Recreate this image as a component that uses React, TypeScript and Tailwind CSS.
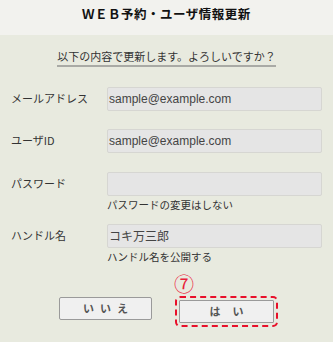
import React from 'react';

const jp = { fontFamily: '"Noto Sans CJK JP", "Noto Sans", sans-serif' };

type RowProps = {
  label: string;
  value: string;
  note?: string;
};

const FormRow: React.FC<RowProps> = ({ label, value, note }) => (
  <div className="flex">
    <div className="w-[96px] shrink-0 pt-[3px] text-[11px] text-[#333]" style={jp}>
      {label}
    </div>
    <div className="w-[215px]">
      <div className="flex h-[24px] items-center rounded-[2px] border border-[#d6d6d2] bg-[#e5e5e5] px-[1px] text-[12px] text-[#444] font-['Liberation_Sans',Arial,sans-serif]">
        <span style={value && !/^[\x00-\x7f]+$/.test(value) ? jp : undefined}>{value}</span>
      </div>
      {note && (
        <div className="mt-[2px] text-[10.5px] leading-[14px] text-[#333]" style={jp}>
          {note}
        </div>
      )}
    </div>
  </div>
);

export default function App() {
  return (
    <div className="w-[333px] h-[342px] overflow-hidden bg-[#e8eadf]" style={jp}>
      {/* header */}
      <div className="flex h-[35px] items-center justify-center bg-[#f2f2ee] pb-[6px]">
        <h1 className="text-[12.5px] font-bold tracking-[0.5px] text-[#111]">ＷＥＢ予約・ユーザ情報更新</h1>
      </div>

      <div className="flex justify-center pt-[14px]">
        <p className="w-[219px] whitespace-nowrap border-b-2 border-[#a9aaa5] pb-[1px] text-center text-[11px] leading-[15px] text-[#333]">
          以下の内容で更新します。よろしいですか？
        </p>
      </div>

      <div className="flex flex-col pl-[11px] pt-[20px]">
        <FormRow label="メールアドレス" value="sample@example.com" />
        <div className="h-[18px]" />
        <FormRow label="ユーザID" value="sample@example.com" />
        <div className="h-[19px]" />
        <FormRow label="パスワード" value="" note="パスワードの変更はしない" />
        <div className="h-[12px]" />
        <FormRow label="ハンドル名" value="コキ万三郎" note="ハンドル名を公開する" />
      </div>

      <div className="mt-[33px] flex justify-center gap-[27px]">
        <button className="h-[23px] w-[93px] rounded-[2px] border border-[#9a9a9a] bg-[#f0f0f0] text-[11px] font-semibold tracking-[6px] text-[#555] pl-[6px]">
          いいえ
        </button>
        <div className="relative">
          <span className="absolute left-[-5px] top-[-24px] text-[20px] leading-[22px] text-[#e8203a]">⑦</span>
          <button className="h-[23px] w-[95px] rounded-[1px] border border-[#9a9a9a] bg-[#f0f0f0] text-[11px] font-semibold tracking-[12px] text-[#555] pl-[12px] outline-2 outline-dashed outline-[#e8102a] outline-offset-[2px]">
            はい
          </button>
        </div>
      </div>
    </div>
  );
}
